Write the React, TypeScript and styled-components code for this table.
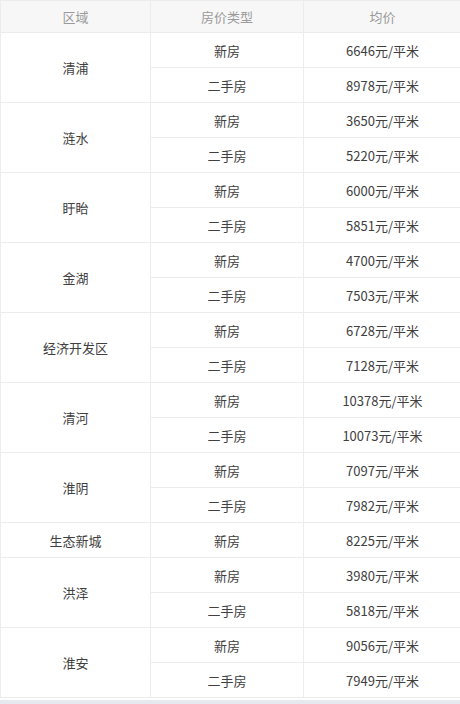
import styled, { createGlobalStyle } from 'styled-components';

const GlobalStyle = createGlobalStyle`
  html, body {
    margin: 0;
    padding: 0;
    background: #ffffff;
  }
  body {
    font-family: "Microsoft YaHei", "Noto Sans CJK SC", "Noto Sans", sans-serif;
  }
`;

interface PriceRow {
  type: string;
  price: number;
}

interface District {
  name: string;
  rows: PriceRow[];
}

const DATA: District[] = [
  { name: '清浦', rows: [{ type: '新房', price: 6646 }, { type: '二手房', price: 8978 }] },
  { name: '涟水', rows: [{ type: '新房', price: 3650 }, { type: '二手房', price: 5220 }] },
  { name: '盱眙', rows: [{ type: '新房', price: 6000 }, { type: '二手房', price: 5851 }] },
  { name: '金湖', rows: [{ type: '新房', price: 4700 }, { type: '二手房', price: 7503 }] },
  { name: '经济开发区', rows: [{ type: '新房', price: 6728 }, { type: '二手房', price: 7128 }] },
  { name: '清河', rows: [{ type: '新房', price: 10378 }, { type: '二手房', price: 10073 }] },
  { name: '淮阴', rows: [{ type: '新房', price: 7097 }, { type: '二手房', price: 7982 }] },
  { name: '生态新城', rows: [{ type: '新房', price: 8225 }] },
  { name: '洪泽', rows: [{ type: '新房', price: 3980 }, { type: '二手房', price: 5818 }] },
  { name: '淮安', rows: [{ type: '新房', price: 9056 }, { type: '二手房', price: 7949 }] },
];

const Page = styled.div`
  width: 460px;
  display: flex;
  flex-direction: column;
`;

const Table = styled.table`
  width: 458px;
  border-collapse: collapse;
  table-layout: fixed;
  font-size: 13px;
  color: #404040;
`;

const HeadCell = styled.th<{ $w: number }>`
  width: ${(p) => p.$w}px;
  height: 31px;
  padding: 0;
  background: #f7f7f7;
  color: #9a9a9a;
  font-weight: normal;
  text-align: center;
  border: 1px solid #ececec;
`;

const Cell = styled.td`
  height: 34px;
  padding: 0;
  text-align: center;
  vertical-align: middle;
  border: 1px solid #ececec;
  background: #ffffff;
`;

const Footer = styled.div`
  height: 5px;
  margin-top: 2px;
  background: #e6e9f0;
`;

export default function App() {
  return (
    <Page>
      <GlobalStyle />
      <Table>
        <thead>
          <tr>
            <HeadCell $w={149}>区域</HeadCell>
            <HeadCell $w={152}>房价类型</HeadCell>
            <HeadCell $w={157}>均价</HeadCell>
          </tr>
        </thead>
        <tbody>
          {DATA.map((d) =>
            d.rows.map((r, i) => (
              <tr key={d.name + r.type}>
                {i === 0 && <Cell rowSpan={d.rows.length}>{d.name}</Cell>}
                <Cell>{r.type}</Cell>
                <Cell>{r.price}元/平米</Cell>
              </tr>
            ))
          )}
        </tbody>
      </Table>
      <Footer />
    </Page>
  );
}
